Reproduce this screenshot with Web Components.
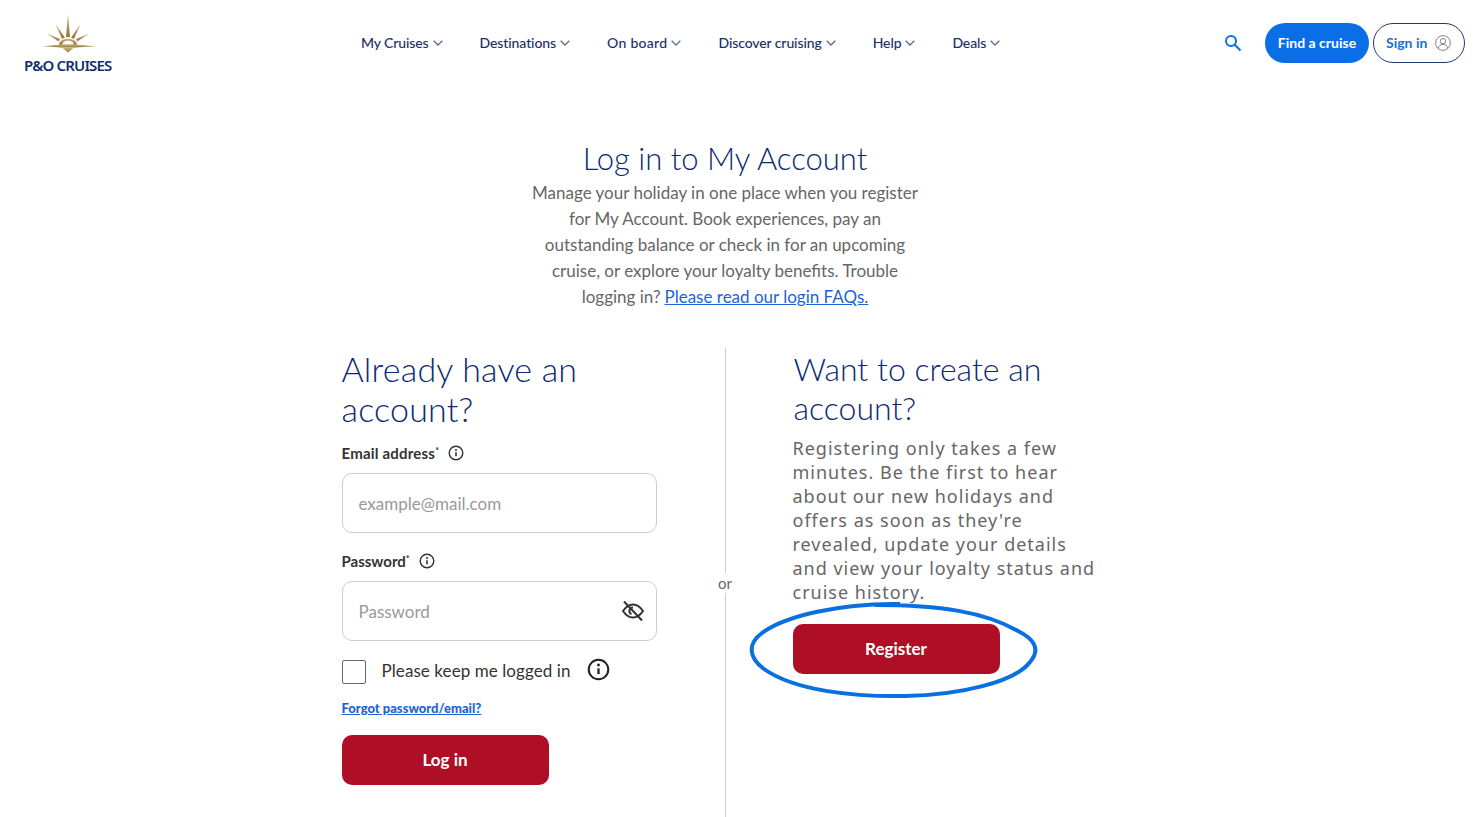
<!DOCTYPE html>
<html lang="en">
<head>
<meta charset="utf-8">
<title>Log in to My Account</title>
<style>
    html, body{
        margin: 0;
        height: 817px;
        overflow: hidden;
        background: #fff;
        font-family: "Lato", "Liberation Sans", sans-serif;
    }
</style>
</head>
<body>
<po-header>
    <po-nav-item>My Cruises</po-nav-item>
    <po-nav-item>Destinations</po-nav-item>
    <po-nav-item style="letter-spacing: .3px">On board</po-nav-item>
    <po-nav-item>Discover cruising</po-nav-item>
    <po-nav-item>Help</po-nav-item>
    <po-nav-item>Deals</po-nav-item>
</po-header>
<po-login-page>
    <span slot="title">Log in to My Account</span>
    <span slot="intro" class="lines">Manage your holiday in one place when you register for My Account. Book experiences, pay an outstanding balance or check in for an upcoming cruise, or explore your loyalty benefits. Trouble</span>
    <span slot="intro">logging in?</span>
    <a slot="intro" href="#">Please read our login FAQs.</a>
    <po-login-form slot="left"></po-login-form>
    <po-register-panel slot="right"></po-register-panel>
</po-login-page>

<script>
const infoIcon = (size) => `
    <svg width="${size}" height="${size}" viewBox="0 0 16 16" fill="none" stroke="currentColor" aria-hidden="true">
        <circle cx="8" cy="8" r="6.8" stroke-width="1.4"/>
        <path d="M8 7.2v4" stroke-width="1.6"/>
        <circle cx="8" cy="4.9" r="1" fill="currentColor" stroke="none"/>
    </svg>`;

class PoHeader extends HTMLElement{
    constructor(){
        super();
        this.attachShadow({mode: 'open'});
        this.shadowRoot.innerHTML = `
            <style>
                :host{
                    display: flex;
                    align-items: flex-start;
                    height: 86px;
                }
                .logo{
                    width: 136px;
                    margin-left: 25px;
                    padding-top: 14px;
                    flex: none;
                }
                .logo svg{ display: block; margin-left: 15px; }
                .logo span{
                    display: block;
                    margin: 3px 0 0 -1px;
                    width: 87px;
                    font: 600 15px/17px "Noto Sans", sans-serif;
                    letter-spacing: -0.85px;
                    color: #12306f;
                    white-space: nowrap;
                }
                nav{
                    display: flex;
                    gap: 37px;
                    margin-left: 200px;
                    padding-top: 33px;
                }
                .right{
                    display: flex;
                    align-items: center;
                    margin-left: auto;
                    margin-right: 19px;
                    padding-top: 23px;
                }
                .search{ display: block; color: #0a6fdf; margin-right: 23px; }
                .find, .sign{
                    box-sizing: border-box;
                    display: flex;
                    align-items: center;
                    height: 40px;
                    padding-bottom: 1px;
                    border-radius: 20px;
                    font-size: 14px;
                    font-weight: 700;
                }
                .find{
                    width: 104px;
                    justify-content: center;
                    background: #0a6fe6;
                    color: #fff;
                    margin-right: 4px;
                }
                .sign{
                    width: 92px;
                    gap: 8px;
                    padding-left: 12px;
                    border: 1px solid #1e3a70;
                    color: #1a6fd8;
                }
                .sign svg{ color: #777; }
            </style>
            <div class="logo">
                <svg width="58" height="40" viewBox="40 15 58 40" aria-hidden="true">
                    <defs>
                        <linearGradient id="gold" x1="0" y1="0" x2="0" y2="1">
                            <stop offset="0" stop-color="#c9b88d"/>
                            <stop offset="1" stop-color="#94762f"/>
                        </linearGradient>
                    </defs>
                    <g fill="url(#gold)">
                        <path d="M68 15l2 23h-4z"/>
                        <path d="M55.500 25l9.500 13.500-3 1.400z"/>
                        <path d="M80.500 25l-9.500 13.500 3 1.400z"/>
                        <path d="M47 34.500l13 5.500-1.400 2.400z"/>
                        <path d="M89 34.500l-13 5.500 1.400 2.400z"/>
                        <path d="M43 47.200l18-1.800h14l21 1.800-21 1.200h-14z"/>
                        <path d="M59 45.800c0-8 18-8 18 0z"/>
                        <path d="M62 48.500h12l-6 5z"/>
                    </g>
                    <path d="M62.500 45.600c0-5 11-5 11 0z" fill="#fff"/>
                </svg>
                <span>P&amp;O CRUISES</span>
            </div>
            <nav><slot></slot></nav>
            <div class="right">
                <svg class="search" width="18" height="18" viewBox="0 0 18 18" fill="none" stroke="currentColor" stroke-width="2" aria-hidden="true">
                    <circle cx="7" cy="7" r="5"/>
                    <path d="M10.800 10.800l5.700 5.700"/>
                </svg>
                <div class="find">Find a cruise</div>
                <div class="sign">Sign in
                    <svg width="16" height="16" viewBox="0 0 16 16" fill="none" stroke="currentColor" stroke-width="0.9" aria-hidden="true">
                        <circle cx="8" cy="8" r="7.400"/>
                        <circle cx="8" cy="6.200" r="2.700"/>
                        <path d="M3.300 13.300c.6-3 2.500-4 4.700-4s4.100 1 4.700 4"/>
                    </svg>
                </div>
            </div>`;
    }
}
customElements.define('po-header', PoHeader);

class PoNavItem extends HTMLElement{
    constructor(){
        super();
        this.attachShadow({mode: 'open'});
        this.shadowRoot.innerHTML = `
            <style>
                :host{
                    display: flex;
                    align-items: center;
                    gap: 4px;
                    font-size: 14px;
                    line-height: 20px;
                    font-weight: 500;
                    letter-spacing: -.1px;
                    color: #1b2f6b;
                }
                svg{ color: #5b6b8f; }
            </style>
            <slot></slot>
            <svg width="10" height="6" viewBox="0 0 10 6" fill="none" stroke="currentColor" stroke-width="1.300" aria-hidden="true">
                <path d="M.7.7l4.300 4.300 4.300-4.300"/>
            </svg>`;
    }
}
customElements.define('po-nav-item', PoNavItem);

class PoLoginPage extends HTMLElement{
    constructor(){
        super();
        this.attachShadow({mode: 'open'});
        this.shadowRoot.innerHTML = `
            <style>
                :host{
                    display: block;
                    padding: 0 34px 0 0;
                    text-align: center;
                }
                h1{
                    margin: 51px 0 0;
                    font-size: 31px;
                    line-height: 42px;
                    font-weight: 300;
                    color: #0b2a73;
                }
                p{
                    width: 400px;
                    margin: 0 auto;
                    padding-top: 1px;
                    font-size: 17px;
                    line-height: 26px;
                    color: #666;
                }
                ::slotted(.lines){ display: block; }
                ::slotted(a){ color: #1c63d8; margin-left: 4px; }
                .columns{
                    display: grid;
                    grid-template-columns: 315px 1px 315px;
                    column-gap: 68px;
                    justify-content: center;
                    margin-top: 38px;
                    text-align: left;
                }
                .divider{
                    position: relative;
                    background: #ccc;
                }
                .divider span{
                    position: absolute;
                    left: -10px;
                    width: 21px;
                    top: 225px;
                    background: #fff;
                    text-align: center;
                    font-size: 15px;
                    line-height: 20px;
                    color: #666;
                }
            </style>
            <h1><slot name="title"></slot></h1>
            <p><slot name="intro"></slot></p>
            <div class="columns">
                <slot name="left"></slot>
                <div class="divider"><span>or</span></div>
                <slot name="right"></slot>
            </div>`;
    }
}
customElements.define('po-login-page', PoLoginPage);

class PoButton extends HTMLElement{
    constructor(){
        super();
        this.attachShadow({mode: 'open'});
        this.shadowRoot.innerHTML = `
            <style>
                :host{
                    box-sizing: border-box;
                    display: flex;
                    align-items: center;
                    justify-content: center;
                    width: 207px;
                    height: 50px;
                    padding-bottom: 2px;
                    border-radius: 10px;
                    background: #ae0f26;
                    color: #fff;
                    font-size: 17px;
                    font-weight: 700;
                }
            </style>
            <slot></slot>`;
    }
}
customElements.define('po-button', PoButton);

class PoField extends HTMLElement{
    constructor(){
        super();
        this.attachShadow({mode: 'open'});
        const showEye = this.hasAttribute('eye');
        this.shadowRoot.innerHTML = `
            <style>
                :host{
                    display: block;
                    margin-bottom: 18px;
                }
                label{
                    display: flex;
                    align-items: center;
                    height: 20px;
                    gap: 9px;
                    font-size: 15px;
                    font-weight: 700;
                    letter-spacing: var(--label-spacing, 0);
                    color: #333;
                }
                sup{ font-size: 9px; line-height: 0; vertical-align: 5px; }
                label svg{ display: block; color: #333; }
                .box{
                    box-sizing: border-box;
                    display: flex;
                    align-items: center;
                    justify-content: space-between;
                    height: 60px;
                    margin-top: 10px;
                    padding: 0 11px 0 16px;
                    border: 1px solid #ccc;
                    border-radius: 10px;
                    font-size: 17px;
                    color: #999;
                }
                .box svg{ display: block; color: #333; }
            </style>
            <label><span>${this.getAttribute('label')}<sup>*</sup></span>${infoIcon(16)}</label>
            <div class="box">
                <span>${this.getAttribute('placeholder')}</span>
                ${showEye ? `
                <svg width="24" height="22" viewBox="0 0 24 22" fill="none" stroke="currentColor" stroke-width="2" aria-hidden="true">
                    <path d="M2 11c3-4.500 6-6.500 10-6.500s7 2 10 6.500c-3 4.500-6 6.500-10 6.500s-7-2-10-6.500z"/>
                    <path d="M12 7.500a3.500 3.500 0 0 0-1.500 6.700"/>
                    <path d="M3 1.500l18 19"/>
                </svg>` : ''}
            </div>`;
    }
}
customElements.define('po-field', PoField);

class PoLoginForm extends HTMLElement{
    constructor(){
        super();
        this.attachShadow({mode: 'open'});
        this.shadowRoot.innerHTML = `
            <style>
                :host{
                    display: block;
                    padding: 1px 0 40px;
                }
                h2{
                    margin: 0 0 14px;
                    font-size: 34px;
                    line-height: 40px;
                    font-weight: 300;
                    letter-spacing: .2px;
                    color: #0b2a73;
                }
                .keep{
                    display: flex;
                    align-items: center;
                    height: 26px;
                    margin-top: 1px;
                    font-size: 17px;
                    letter-spacing: .08px;
                    color: #333;
                }
                .check{
                    box-sizing: border-box;
                    width: 24px;
                    height: 24px;
                    margin-right: 16px;
                    border: 1px solid #666;
                    border-radius: 2px;
                }
                .label{ margin-top: -4px; }
                .keep svg{ margin: -5px 0 0 16px; color: #222; }
                a{
                    display: block;
                    margin: 15px 0 19px;
                    font-size: 13px;
                    line-height: 16px;
                    font-weight: 900;
                    color: #1c63d8;
                }
            </style>
            <h2>Already have an account?</h2>
            <po-field label="Email address" placeholder="example@mail.com" style="--label-spacing: .2px"></po-field>
            <po-field label="Password" placeholder="Password" eye></po-field>
            <div class="keep"><span class="check"></span><span class="label">Please keep me logged in</span>${infoIcon(23)}</div>
            <a href="#">Forgot password/email?</a>
            <po-button>Log in</po-button>`;
    }
}
customElements.define('po-login-form', PoLoginForm);

class PoRegisterPanel extends HTMLElement{
    constructor(){
        super();
        this.attachShadow({mode: 'open'});
        this.shadowRoot.innerHTML = `
            <style>
                :host{
                    display: block;
                    padding-top: 1px;
                }
                h2{
                    width: 280px;
                    margin: 0 0 9px;
                    font-size: 32px;
                    line-height: 39px;
                    font-weight: 300;
                    color: #0b2a73;
                }
                p{
                    width: 305px;
                    margin: 0 0 20px -1px;
                    font: 18px/24px "Noto Sans", sans-serif;
                    letter-spacing: 1px;
                    color: #666;
                }
                .action{
                    position: relative;
                    width: 207px;
                    margin-left: -1px;
                }
                svg{
                    position: absolute;
                    left: -43px;
                    top: -22px;
                    overflow: visible;
                }
            </style>
            <h2>Want to create an account?</h2>
            <p>Registering only takes a few minutes. Be the first to hear about our new holidays and offers as soon as they're revealed, update your details and view your loyalty status and cruise history.</p>
            <div class="action">
                <po-button>Register</po-button>
                <svg width="290" height="96" viewBox="0 0 290 96" fill="none" stroke="#0a6fdf" stroke-width="4" aria-hidden="true">
                    <path d="M150 2C90 1 35 14 12 31C-3 42 -1 56 14 67C45 89 105 95 155 94C210 93 265 80 280 60C292 46 282 36 268 29C235 10 190 3 125 3"/>
                </svg>
            </div>`;
    }
}
customElements.define('po-register-panel', PoRegisterPanel);
</script>
</body>
</html>
